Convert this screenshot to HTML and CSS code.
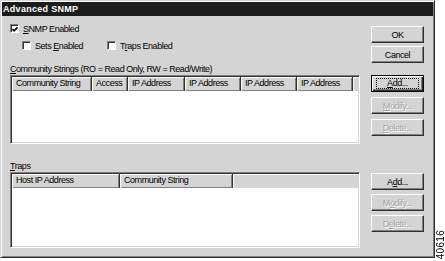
FILE: index.html
```html
<!doctype html>
<html lang="en">
<head>
<meta charset="UTF-8">
<title>Advanced SNMP</title>
<link rel="stylesheet" href="styles.css">
</head>
<body>
<div class="page">
	<div class="dialog">
		<div class="titlebar">Advanced SNMP</div>
		<div class="body">
			<!-- enable switches + OK/Cancel -->
			<div class="section sec_top">
				<div class="left">
					<div class="check">
						<span class="box"><svg width="7" height="7" viewBox="0 0 7 7"><polyline points="0.5,3 2.5,5 6.5,1" fill="none" stroke="#000" stroke-width="1.8"/></svg></span>
						<span><u>S</u>NMP Enabled</span>
					</div>
					<div class="subchecks">
						<div class="check check_sets">
							<span class="box"></span>
							<span>Sets <u>E</u>nabled</span>
						</div>
						<div class="check">
							<span class="box"></span>
							<span>T<u>r</u>aps Enabled</span>
						</div>
					</div>
				</div>
				<div class="buttons btns_top">
					<button class="btn">OK</button>
					<button class="btn">Cancel</button>
				</div>
			</div>

			<!-- community strings -->
			<div class="section sec_comm">
				<div class="left">
					<div class="caption"><u>C</u>ommunity Strings (RO = Read Only, RW = Read/Write)</div>
					<div class="listbox list_comm">
						<div class="header">
							<div class="col" style="width:80px">Community String</div>
							<div class="col" style="width:36px">Access</div>
							<div class="col" style="width:57px">IP Address</div>
							<div class="col" style="width:56px">IP Address</div>
							<div class="col" style="width:56px">IP Address</div>
							<div class="col" style="width:56px">IP Address</div>
							<div class="col filler"></div>
						</div>
					</div>
				</div>
				<div class="buttons btns_comm">
					<button class="btn btn_default"><span class="focus"><u>A</u>dd...</span></button>
					<button class="btn" disabled><u>M</u>odify...</button>
					<button class="btn" disabled><u>D</u>elete...</button>
				</div>
			</div>

			<!-- traps -->
			<div class="section sec_traps">
				<div class="left">
					<div class="caption"><u>T</u>raps</div>
					<div class="listbox list_traps">
						<div class="header">
							<div class="col" style="width:108px">Host IP Address</div>
							<div class="col" style="width:113px">Community String</div>
							<div class="col filler"></div>
						</div>
					</div>
				</div>
				<div class="buttons btns_traps">
					<button class="btn">A<u>d</u>d...</button>
					<button class="btn" disabled>M<u>o</u>dify...</button>
					<button class="btn" disabled>D<u>e</u>lete...</button>
				</div>
			</div>
		</div>
	</div>
	<div class="figno">40616</div>
</div>
</body>
</html>
```
FILE: styles.css
```css
body{
	margin:0;
	background-color:#ffffff;
	font-family:"Liberation Sans", Arial, sans-serif;
	font-size:9px;
	letter-spacing:-0.45px;
	color:#000000;
}
.page{
	display:flex;
	align-items:flex-end;
	width:445px; height:261px;
}
.dialog{
	box-sizing:border-box;
	width:435px; height:258px;
	padding:1px;
	background-color:#d4d4d4;
	border:1px solid;
	border-color:#d4d4d4 #303030 #303030 #d4d4d4;
	box-shadow:inset 1px 1px #ffffff, inset -1px -1px #808080;
	align-self:flex-start;
	display:flex; flex-direction:column;
}
.titlebar{
	height:14px; line-height:14px;
	background-color:#1c1c1c;
	color:#ffffff; font-weight:bold;
	letter-spacing:0.3px;
	padding-left:1px;
}
.body{
	padding-left:8px;
	display:flex; flex-direction:column;
}
.section{
	display:flex;
	gap:11px;
}
.left{
	width:350px;
}
.buttons{
	width:53px;
	display:flex; flex-direction:column;
}

/* checkboxes */
.sec_top .left{
	padding-top:7px;
}
.check{
	display:flex; align-items:center;
	height:11px;
	gap:4px;
}
.box{
	box-sizing:border-box;
	width:9px; height:9px;
	background-color:#ffffff;
	border:1px solid;
	border-color:#808080 #ffffff #ffffff #808080;
	box-shadow:inset 1px 1px #303030;
	display:flex; align-items:center; justify-content:center;
}
.box svg{
	margin:1px 0 0 1px;
}
.subchecks{
	display:flex;
	margin-top:6px;
	padding-left:12px;
}
.check_sets{
	width:85px;
}

/* buttons */
.btn{
	box-sizing:border-box;
	width:53px; height:17px;
	padding:0;
	font-family:inherit; font-size:9px;
	letter-spacing:-0.45px;
	color:#000000;
	background-color:#d4d4d4;
	border:1px solid;
	border-color:#ffffff #303030 #303030 #ffffff;
	box-shadow:inset -1px -1px #808080;
	display:flex; align-items:center; justify-content:center;
}
.btn:disabled{
	color:#a4a4a4;
	text-shadow:1px 1px #ffffff;
}
.btn_default{
	border-color:#000000;
	box-shadow:inset 1px 1px #ffffff, inset -1px -1px #303030, inset -2px -2px #808080;
}
.focus{
	box-sizing:border-box;
	width:43px; height:11px; line-height:9px;
	border:1px dotted #000000;
	text-align:center;
}
.btns_top{
	margin-top:10px;
	gap:3px;
}
.btns_comm{
	margin-top:11px;
	gap:5px;
}
.btns_traps{
	margin-top:12px;
	gap:4px;
}

/* list views */
.caption{
	height:11px; line-height:11px;
}
.sec_comm{
	margin-top:1px;
}
.sec_traps{
	margin-top:17px;
}
.listbox{
	box-sizing:border-box;
	width:350px;
	background-color:#ffffff;
	border:1px solid;
	border-color:#808080 #ffffff #ffffff #808080;
	box-shadow:inset 1px 1px #303030, inset -1px -1px #d4d4d4;
	padding:1px;
}
.list_comm{
	height:69px;
}
.list_traps{
	height:76px;
}
.header{
	display:flex;
	height:14px;
}
.col{
	box-sizing:border-box;
	height:14px; line-height:13px;
	padding-left:4px;
	background-color:#d4d4d4;
	border-right:1px solid #303030;
	box-shadow:inset 1px 1px #ffffff, inset -1px -1px #808080;
	white-space:nowrap; overflow:hidden;
}
.col.filler{
	flex:1;
	border-right:none;
	box-shadow:inset 1px 1px #ffffff;
}

.figno{
	writing-mode:vertical-rl;
	transform:rotate(180deg);
	font-size:10px;
	letter-spacing:0.3px;
	margin:0 0 2px 2px;
	line-height:8px;
}
```
